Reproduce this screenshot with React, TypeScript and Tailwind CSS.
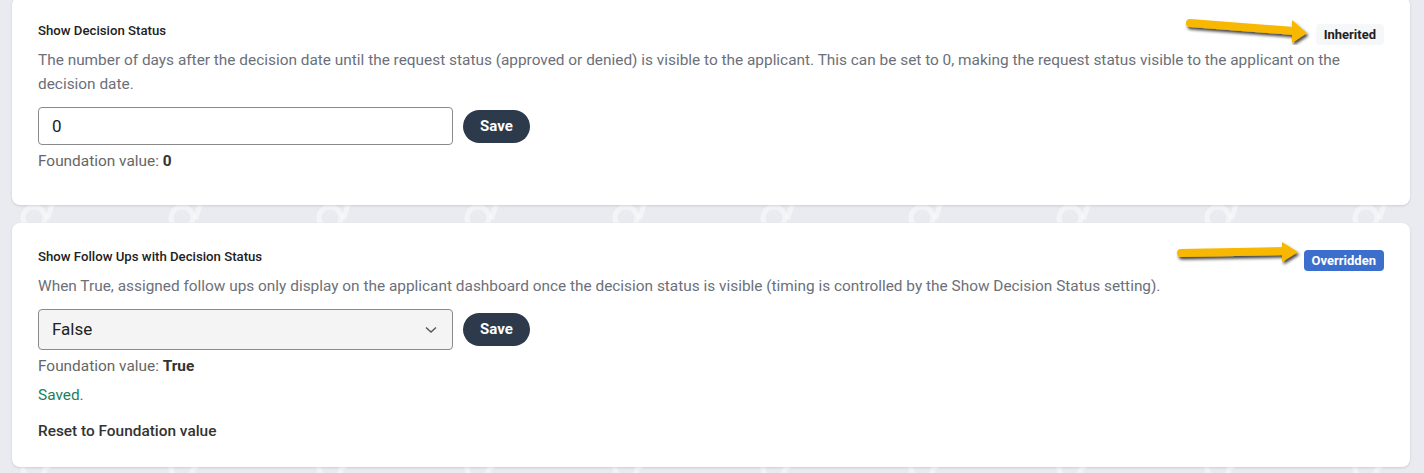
import React from "react";

const font = { fontFamily: "Roboto, 'Noto Sans', Arial, sans-serif" };

function Watermark() {
  // faint repeating logo marks behind the cards
  return (
    <svg className="pointer-events-none absolute inset-0 h-full w-full" aria-hidden="true">
      <defs>
        <pattern id="wm" x="18" y="-40" width="148" height="250" patternUnits="userSpaceOnUse">
          <circle cx="16" cy="258" r="11" fill="none" stroke="#ffffff" strokeOpacity="0.45" strokeWidth="5" />
          <path d="M34 245 l-4 12" stroke="#ffffff" strokeOpacity="0.45" strokeWidth="5" strokeLinecap="round" />
          <circle cx="16" cy="8" r="11" fill="none" stroke="#ffffff" strokeOpacity="0.45" strokeWidth="5" />
          <path d="M34 -5 l-4 12" stroke="#ffffff" strokeOpacity="0.45" strokeWidth="5" strokeLinecap="round" />
        </pattern>
      </defs>
      <rect width="100%" height="100%" fill="url(#wm)" />
    </svg>
  );
}

function Arrow({ className, d, head }: { className: string; d: string; head: string }) {
  return (
    <svg className={className} viewBox="0 0 140 40" aria-hidden="true">
      <defs>
        <filter id="arrowShadow" x="-10%" y="-30%" width="130%" height="180%">
          <feDropShadow dx="1.5" dy="2.5" stdDeviation="1.4" floodColor="#000" floodOpacity="0.75" />
        </filter>
      </defs>
      <g filter="url(#arrowShadow)">
        <path d={d} stroke="#f8b700" strokeWidth="8" strokeLinecap="round" fill="none" />
        <polygon points={head} fill="#f8b700" />
      </g>
    </svg>
  );
}

function Badge({ kind }: { kind: "inherited" | "overridden" }) {
  if (kind === "inherited") {
    return (
      <span className="mt-px inline-flex h-[21px] items-center rounded bg-[#f6f7f9] px-2 text-[13px] font-bold text-[#222]">
        Inherited
      </span>
    );
  }
  return (
    <span className="mt-px inline-flex h-[21px] items-center rounded bg-[#3c6fcd] px-2 text-[13px] font-bold text-white">
      Overridden
    </span>
  );
}

function SaveButton() {
  return (
    <button className="h-[33px] w-[67px] rounded-full bg-[#2c3a4b] text-[15px] font-bold text-white">
      Save
    </button>
  );
}

function FoundationValue({ value }: { value: string }) {
  return (
    <p className="mt-[6px] text-[15.4px] leading-5 text-[#666]">
      Foundation value: <span className="font-bold text-[#333]">{value}</span>
    </p>
  );
}

export default function App() {
  return (
    <div className="relative h-[473px] overflow-hidden bg-[#eaebf0] pl-3 pr-[14px]" style={font}>
      <Watermark />

      {/* Show Decision Status */}
      <section className="relative -mt-[3px] rounded-lg bg-white px-[26px] pb-[34px] pt-[26px] shadow-sm">
        <div className="flex items-start justify-between">
          <h3 className="text-[13.2px] font-medium leading-4 text-[#222]">Show Decision Status</h3>
          <Badge kind="inherited" />
        </div>
        <p className="mt-[3px] text-[15.4px] leading-6 text-[#6b7079]">
          The number of days after the decision date until the request status (approved or denied) is visible to the
          applicant. This can be set to 0, making the request status visible to the applicant on the decision date.
        </p>
        <div className="mt-[11px] flex items-center gap-[10px]">
          <input
            readOnly
            value="0"
            className="h-[38px] w-[415px] rounded border border-[#8a8a8a] px-[13px] text-[17px] text-[#222] outline-none"
          />
          <SaveButton />
        </div>
        <FoundationValue value="0" />
        <Arrow
          className="absolute left-[1160px] top-[8px] h-[40px] w-[140px]"
          d="M18 18 L122 26"
          head="120,15 135,28 120,38"
        />
      </section>

      {/* Show Follow Ups with Decision Status */}
      <section className="relative mt-[18px] rounded-lg bg-white px-[26px] pb-[26px] pt-[26px] shadow-sm">
        <div className="flex items-start justify-between">
          <h3 className="text-[13.2px] font-medium leading-4 text-[#222]">Show Follow Ups with Decision Status</h3>
          <Badge kind="overridden" />
        </div>
        <p className="mt-[3px] text-[15.4px] leading-6 text-[#6b7079]">
          When True, assigned follow ups only display on the applicant dashboard once the decision status is visible
          (timing is controlled by the Show Decision Status setting).
        </p>
        <div className="mt-[11px] flex items-center gap-[10px]">
          <div className="flex h-[41px] w-[415px] items-center justify-between rounded border border-[#8a8a8a] bg-[#f4f4f4] pl-[13px] pr-[15px]">
            <span className="text-[17px] text-[#222]">False</span>
            <svg width="12" height="8" viewBox="0 0 12 8" aria-hidden="true">
              <path d="M1 1.5 L6 6 L11 1.5" fill="none" stroke="#555" strokeWidth="1.4" />
            </svg>
          </div>
          <SaveButton />
        </div>
        <FoundationValue value="True" />
        <p className="mt-[9px] text-[15.4px] leading-5 text-[#1b7f5b]">Saved.</p>
        <p className="mt-4 text-[15.4px] font-medium leading-5 text-[#333]">Reset to Foundation value</p>
        <Arrow
          className="absolute left-[1162px] top-[12px] h-[40px] w-[140px]"
          d="M7 18 L112 16"
          head="108,7 124,17 108,27"
        />
      </section>
    </div>
  );
}
